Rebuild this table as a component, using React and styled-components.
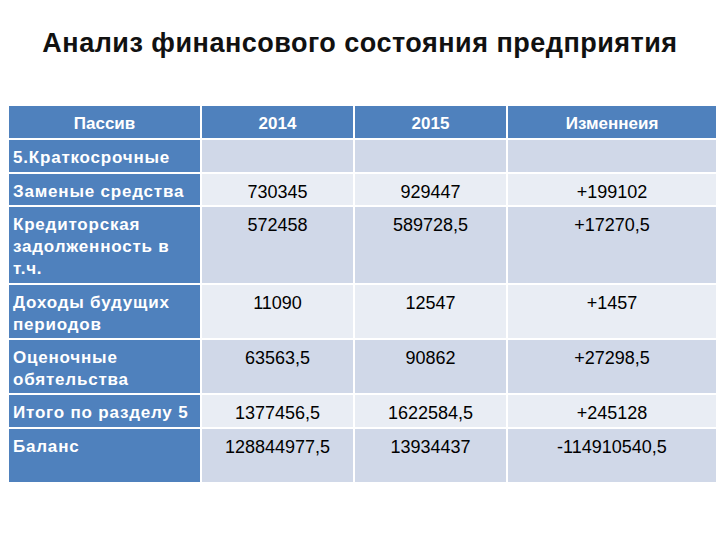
import React from 'react'
import styled, { createGlobalStyle } from 'styled-components'

const GlobalStyle = createGlobalStyle`
  html, body {
    margin: 0;
    padding: 0;
    background: #ffffff;
  }
  body {
    width: 720px;
    height: 540px;
    overflow: hidden;
    font-family: "Liberation Sans", Arial, sans-serif;
  }
`

const Slide = styled.div`
  width: 720px;
  height: 540px;
  display: flex;
  flex-direction: column;
  align-items: flex-start;
  padding-top: 28px;
  box-sizing: border-box;
`

const Title = styled.h1`
  align-self: center;
  margin: 0;
  font-size: 27px;
  line-height: 31px;
  font-weight: bold;
  color: #111;
  letter-spacing: 0.5px;
`

const Table = styled.table`
  margin-top: 47px;
  margin-left: 9px;
  width: 707px;
  border-collapse: collapse;
  table-layout: fixed;
`

const HeadCell = styled.th`
  background: #4f81bd;
  color: #ffffff;
  font-size: 17px;
  font-weight: bold;
  line-height: 21px;
  text-align: center;
  vertical-align: top;
  padding: 7px 4px 0;
  height: 33px;
  box-sizing: border-box;
  border: 2px solid #ffffff;
  border-top: none;
  &:first-child { border-left: none; }
  &:last-child { border-right: none; }
`

const Row = styled.tr`
  height: ${p => p.$h}px;
`

const LabelCell = styled.td`
  background: #4f81bd;
  color: #ffffff;
  font-size: 17px;
  font-weight: bold;
  line-height: 22px;
  letter-spacing: 0.8px;
  text-align: left;
  vertical-align: top;
  padding: 7px 2px 0 4px;
  border: 2px solid #ffffff;
  border-left: none;
  box-sizing: border-box;
`

const ValueCell = styled.td`
  background: ${p => (p.$light ? '#e9edf4' : '#d0d8e8')};
  color: #000;
  font-size: 18px;
  line-height: 22px;
  text-align: center;
  vertical-align: top;
  padding: 7px 4px 0;
  border: 2px solid #ffffff;
  box-sizing: border-box;
  &:last-child { border-right: none; }
`

const rows = [
  { label: '5.Краткосрочные', v: ['', '', ''], h: 34 },
  { label: 'Заменые средства', v: ['730345', '929447', '+199102'], h: 33 },
  { label: 'Кредиторская задолженность в т.ч.', v: ['572458', '589728,5', '+17270,5'], h: 78 },
  { label: 'Доходы будущих периодов', v: ['11090', '12547', '+1457'], h: 55 },
  { label: 'Оценочные обятельства', v: ['63563,5', '90862', '+27298,5'], h: 55 },
  { label: 'Итого по разделу 5', v: ['1377456,5', '1622584,5', '+245128'], h: 34 },
  { label: 'Баланс', v: ['128844977,5', '13934437', '-114910540,5'], h: 55 },
]

const App = () => {
  return (
    <Slide>
      <GlobalStyle />
      <Title>Анализ финансового состояния предприятия</Title>
      <Table>
        <colgroup>
          <col style={{ width: 192 }} />
          <col style={{ width: 153 }} />
          <col style={{ width: 153 }} />
          <col style={{ width: 209 }} />
        </colgroup>
        <thead>
          <tr>
            <HeadCell>Пассив</HeadCell>
            <HeadCell>2014</HeadCell>
            <HeadCell>2015</HeadCell>
            <HeadCell>Изменнеия</HeadCell>
          </tr>
        </thead>
        <tbody>
          {rows.map((r, i) => (
            <Row key={i} $h={r.h}>
              <LabelCell>{r.label}</LabelCell>
              {r.v.map((val, j) => (
                <ValueCell key={j} $light={i % 2 === 1}>{val}</ValueCell>
              ))}
            </Row>
          ))}
        </tbody>
      </Table>
    </Slide>
  )
}

export default App
